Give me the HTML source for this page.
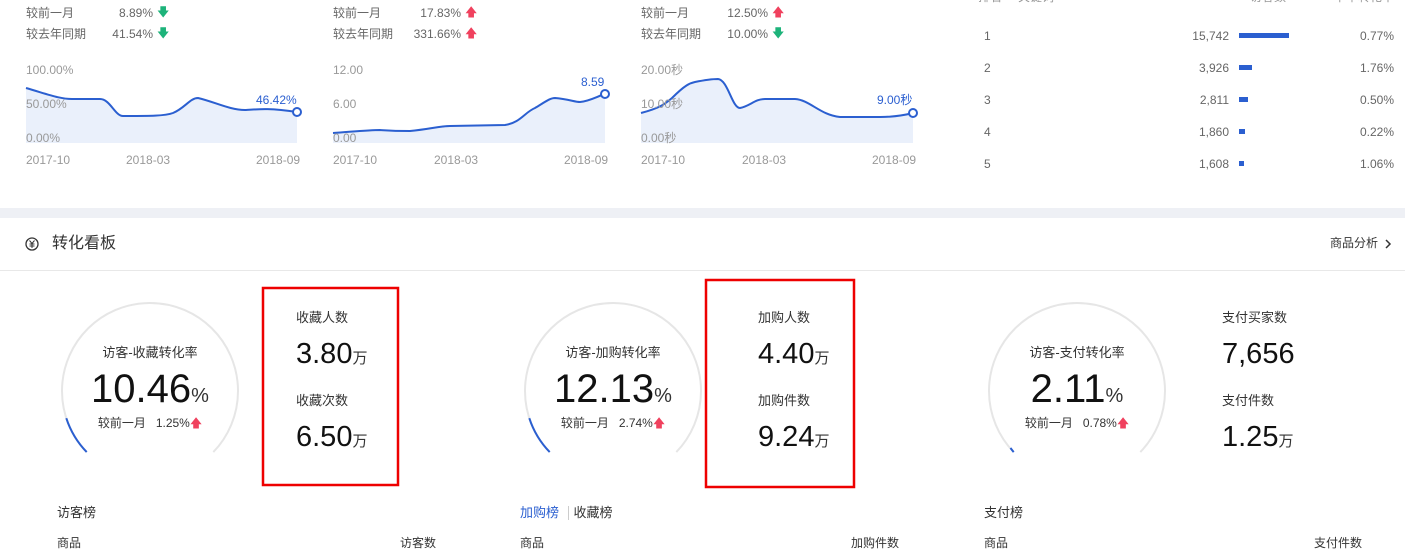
<!DOCTYPE html>
<html><head><meta charset="utf-8">
<style>
*{margin:0;padding:0;box-sizing:border-box}
body{width:1405px;height:554px;overflow:hidden;background:#fff;position:relative;font-family:"Liberation Sans","Noto Sans CJK SC",sans-serif;color:#333}
.a{position:absolute;white-space:nowrap;line-height:1}
.s{font-size:12px;color:#666}
.g{color:#999;font-size:12px}
.r{text-align:right}
.up{color:#f0415e;font-size:12px}
.dn{color:#1db37a;font-size:12px}
.lbl{font-size:13px;color:#333}
.big{font-size:40px;color:#111}
.mid{font-size:29px;color:#111}
.u{font-size:15px}
svg{position:absolute;left:0;top:0}
</style></head><body>

<!-- top metrics -->
<div class="a s" style="left:26px;top:7px">较前一月</div>
<div class="a s r" style="left:100px;top:7px;width:53px">8.89%</div><div class="a dn" style="left:157px;top:6px">🡇</div>
<div class="a s" style="left:26px;top:28px">较去年同期</div>
<div class="a s r" style="left:100px;top:28px;width:53px">41.54%</div><div class="a dn" style="left:157px;top:27px">🡇</div>

<div class="a s" style="left:333px;top:7px">较前一月</div>
<div class="a s r" style="left:400px;top:7px;width:61px">17.83%</div><div class="a up" style="left:465px;top:6px">🡅</div>
<div class="a s" style="left:333px;top:28px">较去年同期</div>
<div class="a s r" style="left:400px;top:28px;width:61px">331.66%</div><div class="a up" style="left:465px;top:27px">🡅</div>

<div class="a s" style="left:641px;top:7px">较前一月</div>
<div class="a s r" style="left:700px;top:7px;width:68px">12.50%</div><div class="a up" style="left:772px;top:6px">🡅</div>
<div class="a s" style="left:641px;top:28px">较去年同期</div>
<div class="a s r" style="left:700px;top:28px;width:68px">10.00%</div><div class="a dn" style="left:772px;top:27px">🡇</div>

<svg width="1405" height="554">
 <!-- chart 1 -->
 <path d="M26,88 C50,95 60,99 72,99 L100,99 C110,99 115,116 123,116 C150,116 165,116 173,113 C185,108 190,98 198,98 C215,102 230,110 245,110 C260,109 270,108 297,112 L297,143 L26,143Z" fill="#eaf0fb"/>
 <path d="M26,88 C50,95 60,99 72,99 L100,99 C110,99 115,116 123,116 C150,116 165,116 173,113 C185,108 190,98 198,98 C215,102 230,110 245,110 C260,109 270,108 297,112" fill="none" stroke="#2b5fd0" stroke-width="2"/>
 <circle cx="297" cy="112" r="4" fill="#fff" stroke="#2b5fd0" stroke-width="2"/>
 <!-- chart 2 -->
 <path d="M333,133 C360,131 370,130 380,130 C395,131 400,131 410,131 C430,129 440,126 450,126 L505,125 C520,123 525,112 535,108 C545,102 550,98 555,98 C568,99 575,102 580,102 C590,101 598,96 605,94 L605,143 L333,143Z" fill="#eaf0fb"/>
 <path d="M333,133 C360,131 370,130 380,130 C395,131 400,131 410,131 C430,129 440,126 450,126 L505,125 C520,123 525,112 535,108 C545,102 550,98 555,98 C568,99 575,102 580,102 C590,101 598,96 605,94" fill="none" stroke="#2b5fd0" stroke-width="2"/>
 <circle cx="605" cy="94" r="4" fill="#fff" stroke="#2b5fd0" stroke-width="2"/>
 <!-- chart 3 -->
 <path d="M641,113 C660,108 665,104 672,98 C685,85 690,83 695,82 C705,80 712,79 718,79 C728,80 732,108 740,108 C750,106 755,99 765,99 L795,99 C810,100 820,115 840,117 L880,117 C895,117 905,115 913,113 L913,143 L641,143Z" fill="#eaf0fb"/>
 <path d="M641,113 C660,108 665,104 672,98 C685,85 690,83 695,82 C705,80 712,79 718,79 C728,80 732,108 740,108 C750,106 755,99 765,99 L795,99 C810,100 820,115 840,117 L880,117 C895,117 905,115 913,113" fill="none" stroke="#2b5fd0" stroke-width="2"/>
 <circle cx="913" cy="113" r="4" fill="#fff" stroke="#2b5fd0" stroke-width="2"/>
 <!-- rank bars -->
 <rect x="1239" y="33" width="50" height="5" fill="#2b5fd0"/>
 <rect x="1239" y="65" width="13" height="5" fill="#2b5fd0"/>
 <rect x="1239" y="97" width="9" height="5" fill="#2b5fd0"/>
 <rect x="1239" y="129" width="6" height="5" fill="#2b5fd0"/>
 <rect x="1239" y="161" width="5" height="5" fill="#2b5fd0"/>
 <!-- band -->
 <rect x="0" y="208" width="1405" height="10" fill="#eef0f5"/>
 <rect x="0" y="270" width="1405" height="1" fill="#e8e8e8"/>
 <!-- icon -->
 <circle cx="32" cy="244" r="6" fill="none" stroke="#333" stroke-width="1.3"/>
 <path d="M29.5,240.5 L32,243.5 L34.5,240.5 M29.5,244 H34.5 M29.5,246 H34.5 M32,243.5 V248" fill="none" stroke="#333" stroke-width="1"/>
 <path d="M1386,240 L1390,244 L1386,248" fill="none" stroke="#333" stroke-width="1.5"/>
 <!-- gauges -->
 <g fill="none" stroke-width="2">
  <path d="M86.7,452.1 A88,88 0 1 1 213.3,452.1" stroke="#e6e6e6"/>
  <path d="M86.7,452.1 A88,88 0 0 1 66.3,418.2" stroke="#2b5fd0"/>
  <path d="M549.7,452.1 A88,88 0 1 1 676.3,452.1" stroke="#e6e6e6"/>
  <path d="M549.7,452.1 A88,88 0 0 1 529.3,418.2" stroke="#2b5fd0"/>
  <path d="M1013.7,452.1 A88,88 0 1 1 1140.3,452.1" stroke="#e6e6e6"/>
  <path d="M1013.7,452.1 A88,88 0 0 1 1010.5,448" stroke="#2b5fd0"/>
 </g>
 <!-- red boxes -->
 <rect x="263" y="288" width="135" height="197" fill="none" stroke="#e00" stroke-width="2.5"/>
 <rect x="706" y="280" width="148" height="207" fill="none" stroke="#e00" stroke-width="2.5"/>
 <rect x="568" y="506" width="1" height="14" fill="#ccc"/>
</svg>

<!-- chart labels -->
<div class="a g" style="left:26px;top:64px">100.00%</div>
<div class="a g" style="left:26px;top:98px">50.00%</div>
<div class="a g" style="left:26px;top:132px">0.00%</div>
<div class="a" style="left:256px;top:94px;font-size:12px;color:#2b5fd0">46.42%</div>
<div class="a g" style="left:26px;top:154px">2017-10</div>
<div class="a g" style="left:126px;top:154px">2018-03</div>
<div class="a g" style="left:256px;top:154px">2018-09</div>

<div class="a g" style="left:333px;top:64px">12.00</div>
<div class="a g" style="left:333px;top:98px">6.00</div>
<div class="a g" style="left:333px;top:132px">0.00</div>
<div class="a" style="left:581px;top:76px;font-size:12px;color:#2b5fd0">8.59</div>
<div class="a g" style="left:333px;top:154px">2017-10</div>
<div class="a g" style="left:434px;top:154px">2018-03</div>
<div class="a g" style="left:564px;top:154px">2018-09</div>

<div class="a g" style="left:641px;top:64px">20.00秒</div>
<div class="a g" style="left:641px;top:98px">10.00秒</div>
<div class="a g" style="left:641px;top:132px">0.00秒</div>
<div class="a" style="left:877px;top:94px;font-size:12px;color:#2b5fd0">9.00秒</div>
<div class="a g" style="left:641px;top:154px">2017-10</div>
<div class="a g" style="left:742px;top:154px">2018-03</div>
<div class="a g" style="left:872px;top:154px">2018-09</div>

<!-- rank table -->
<div class="a g" style="left:978px;top:-9px">排名</div>
<div class="a g" style="left:1018px;top:-9px">关键词</div>
<div class="a g" style="left:1250px;top:-9px">访客数</div>
<div class="a g r" style="left:1300px;top:-9px;width:94px">下单转化率</div>
<div class="a s" style="left:984px;top:30px">1</div><div class="a s r" style="left:1150px;top:30px;width:79px">15,742</div><div class="a s r" style="left:1330px;top:30px;width:64px">0.77%</div>
<div class="a s" style="left:984px;top:62px">2</div><div class="a s r" style="left:1150px;top:62px;width:79px">3,926</div><div class="a s r" style="left:1330px;top:62px;width:64px">1.76%</div>
<div class="a s" style="left:984px;top:94px">3</div><div class="a s r" style="left:1150px;top:94px;width:79px">2,811</div><div class="a s r" style="left:1330px;top:94px;width:64px">0.50%</div>
<div class="a s" style="left:984px;top:126px">4</div><div class="a s r" style="left:1150px;top:126px;width:79px">1,860</div><div class="a s r" style="left:1330px;top:126px;width:64px">0.22%</div>
<div class="a s" style="left:984px;top:158px">5</div><div class="a s r" style="left:1150px;top:158px;width:79px">1,608</div><div class="a s r" style="left:1330px;top:158px;width:64px">1.06%</div>

<!-- header -->
<div class="a" style="left:52px;top:236px;font-size:16px;color:#333">转化看板</div>
<div class="a" style="left:1330px;top:237px;font-size:12px;color:#333">商品分析</div>

<!-- gauge texts -->
<div class="a lbl" style="left:62px;top:346px;width:176px;text-align:center">访客-收藏转化率</div>
<div class="a" style="left:62px;top:369px;width:176px;text-align:center"><span class="big">10.46</span><span style="font-size:20px">%</span></div>
<div class="a" style="left:62px;top:417px;width:176px;text-align:center;font-size:12px;color:#333">较前一月&nbsp;&nbsp;&nbsp;1.25%<span class="up">🡅</span></div>

<div class="a lbl" style="left:525px;top:346px;width:176px;text-align:center">访客-加购转化率</div>
<div class="a" style="left:525px;top:369px;width:176px;text-align:center"><span class="big">12.13</span><span style="font-size:20px">%</span></div>
<div class="a" style="left:525px;top:417px;width:176px;text-align:center;font-size:12px;color:#333">较前一月&nbsp;&nbsp;&nbsp;2.74%<span class="up">🡅</span></div>

<div class="a lbl" style="left:989px;top:346px;width:176px;text-align:center">访客-支付转化率</div>
<div class="a" style="left:989px;top:369px;width:176px;text-align:center"><span class="big">2.11</span><span style="font-size:20px">%</span></div>
<div class="a" style="left:989px;top:417px;width:176px;text-align:center;font-size:12px;color:#333">较前一月&nbsp;&nbsp;&nbsp;0.78%<span class="up">🡅</span></div>

<!-- side values -->
<div class="a lbl" style="left:296px;top:311px">收藏人数</div>
<div class="a" style="left:296px;top:340px"><span class="mid">3.80</span><span class="u">万</span></div>
<div class="a lbl" style="left:296px;top:394px">收藏次数</div>
<div class="a" style="left:296px;top:423px"><span class="mid">6.50</span><span class="u">万</span></div>

<div class="a lbl" style="left:758px;top:311px">加购人数</div>
<div class="a" style="left:758px;top:340px"><span class="mid">4.40</span><span class="u">万</span></div>
<div class="a lbl" style="left:758px;top:394px">加购件数</div>
<div class="a" style="left:758px;top:423px"><span class="mid">9.24</span><span class="u">万</span></div>

<div class="a lbl" style="left:1222px;top:311px">支付买家数</div>
<div class="a" style="left:1222px;top:340px"><span class="mid">7,656</span></div>
<div class="a lbl" style="left:1222px;top:394px">支付件数</div>
<div class="a" style="left:1222px;top:423px"><span class="mid">1.25</span><span class="u">万</span></div>

<!-- bottom -->
<div class="a lbl" style="left:57px;top:506px">访客榜</div>
<div class="a s" style="left:57px;top:537px;color:#333">商品</div>
<div class="a s r" style="left:336px;top:537px;width:100px;color:#333">访客数</div>
<div class="a lbl" style="left:520px;top:506px"><span style="color:#2b5fd0">加购榜</span>&nbsp;&nbsp;&nbsp;&nbsp;收藏榜</div>
<div class="a s" style="left:520px;top:537px;color:#333">商品</div>
<div class="a s r" style="left:799px;top:537px;width:100px;color:#333">加购件数</div>
<div class="a lbl" style="left:984px;top:506px">支付榜</div>
<div class="a s" style="left:984px;top:537px;color:#333">商品</div>
<div class="a s r" style="left:1262px;top:537px;width:100px;color:#333">支付件数</div>
</body></html>
